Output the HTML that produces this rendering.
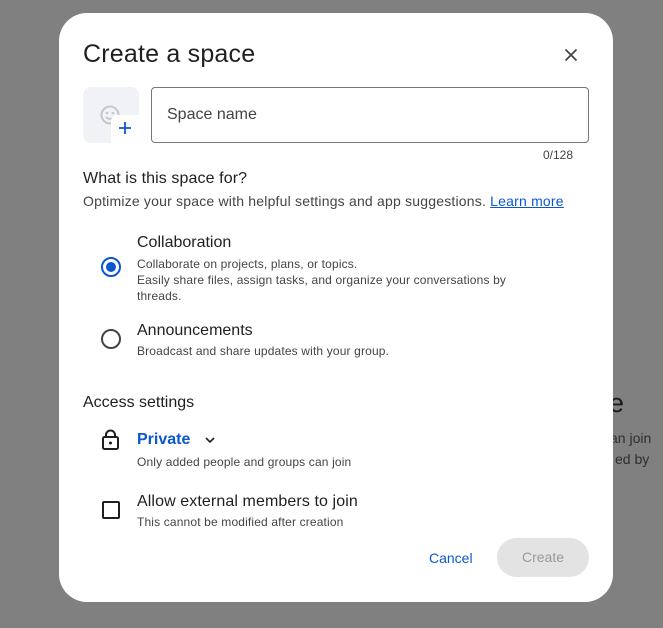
<!DOCTYPE html>
<html><head><style>
body{margin:0;width:663px;height:628px;background:#808080;position:relative;overflow:hidden;font-family:"Liberation Sans",sans-serif;color:#1f1f1f}
.a{position:absolute;white-space:nowrap}
.m{position:absolute;left:59px;top:13px;width:554px;height:589px;background:#fff;border-radius:28px}
</style></head><body>
<div class="a" style="left:609px;top:388px;font-size:27px;color:#1a1a1a">e</div>
<div class="a" style="left:610px;top:430px;font-size:14px;color:#2e2e2e">an join</div>
<div class="a" style="left:615px;top:451px;font-size:14px;color:#2e2e2e">ed by</div>
<div class="m"></div>
<div class="a" style="left:83px;top:40px;font-size:25px;letter-spacing:0.2px">Create a space</div>
<svg class="a" style="left:564px;top:48px" width="14" height="14"><path d="M1.5 1.5L12.5 12.5M12.5 1.5L1.5 12.5" stroke="#444" stroke-width="1.8"/></svg>
<div class="a" style="left:83px;top:87px;width:56px;height:56px;background:#f0f2f6;border-radius:8px"></div>
<svg class="a" style="left:99px;top:104px" width="22" height="22"><circle cx="11" cy="11" r="8.5" fill="none" stroke="#c4c7c5" stroke-width="2"/><circle cx="8" cy="9" r="1.3" fill="#c4c7c5"/><circle cx="14" cy="9" r="1.3" fill="#c4c7c5"/><path d="M7 13Q11 17 15 13" stroke="#c4c7c5" stroke-width="1.8" fill="none"/></svg>
<div class="a" style="left:111px;top:115px;width:28px;height:28px;background:#fff;border-radius:6px 0 8px 0"></div>
<svg class="a" style="left:118px;top:121px" width="14" height="14"><path d="M7 1V13M1 7H13" stroke="#0b57d0" stroke-width="1.8"/></svg>
<div class="a" style="left:151px;top:87px;width:436px;height:54px;border:1px solid #747775;border-radius:4px"></div>
<div class="a" style="left:167px;top:106px;font-size:16px;color:#444">Space name</div>
<div class="a" style="left:543px;top:148px;font-size:12px;color:#444">0/128</div>
<div class="a" style="left:83px;top:170px;font-size:16px;letter-spacing:0.1px">What is this space for?</div>
<div class="a" style="left:83px;top:193px;font-size:14px;color:#444;letter-spacing:0.2px">Optimize your space with helpful settings and app suggestions. <span style="color:#0b57d0;text-decoration:underline">Learn more</span></div>
<svg class="a" style="left:100px;top:256px" width="22" height="22"><circle cx="11" cy="11" r="9" fill="none" stroke="#0b57d0" stroke-width="2"/><circle cx="11" cy="11" r="5" fill="#0b57d0"/></svg>
<div class="a" style="left:137px;top:234px;font-size:16px">Collaboration</div>
<div class="a" style="left:137px;top:256px;font-size:12px;color:#444;line-height:16px;letter-spacing:0.15px">Collaborate on projects, plans, or topics.<br>Easily share files, assign tasks, and organize your conversations by<br>threads.</div>
<svg class="a" style="left:100px;top:328px" width="22" height="22"><circle cx="11" cy="11" r="9" fill="none" stroke="#444" stroke-width="2"/></svg>
<div class="a" style="left:137px;top:322px;font-size:16px">Announcements</div>
<div class="a" style="left:137px;top:344px;font-size:12px;color:#444;letter-spacing:0.15px">Broadcast and share updates with your group.</div>
<div class="a" style="left:83px;top:394px;font-size:16px">Access settings</div>
<svg class="a" style="left:101px;top:429px" width="20" height="22"><rect x="2" y="8" width="15" height="12" rx="1.5" fill="none" stroke="#1f1f1f" stroke-width="2"/><path d="M5 8V6A4.5 4.5 0 0 1 14 6V8" fill="none" stroke="#1f1f1f" stroke-width="2"/><circle cx="9.5" cy="14" r="1.5" fill="#1f1f1f"/></svg>
<div class="a" style="left:137px;top:431px;font-size:16px;font-weight:bold;color:#0b57d0">Private</div>
<svg class="a" style="left:204px;top:436px" width="12" height="8"><path d="M2 2L6 6L10 2" stroke="#1f1f1f" stroke-width="1.6" fill="none"/></svg>
<div class="a" style="left:137px;top:455px;font-size:12px;color:#444;letter-spacing:0.15px">Only added people and groups can join</div>
<div class="a" style="left:102px;top:501px;width:14px;height:14px;border:2px solid #1f1f1f;border-radius:2px"></div>
<div class="a" style="left:137px;top:493px;font-size:16px;letter-spacing:0.1px">Allow external members to join</div>
<div class="a" style="left:137px;top:515px;font-size:12px;color:#444;letter-spacing:0.15px">This cannot be modified after creation</div>
<div class="a" style="left:429px;top:550px;font-size:14px;color:#0b57d0">Cancel</div>
<div class="a" style="left:497px;top:538px;width:92px;height:39px;border-radius:20px;background:#e3e3e3;color:#9a9a9a;font-size:14px;text-align:center;line-height:39px">Create</div>
</body></html>
